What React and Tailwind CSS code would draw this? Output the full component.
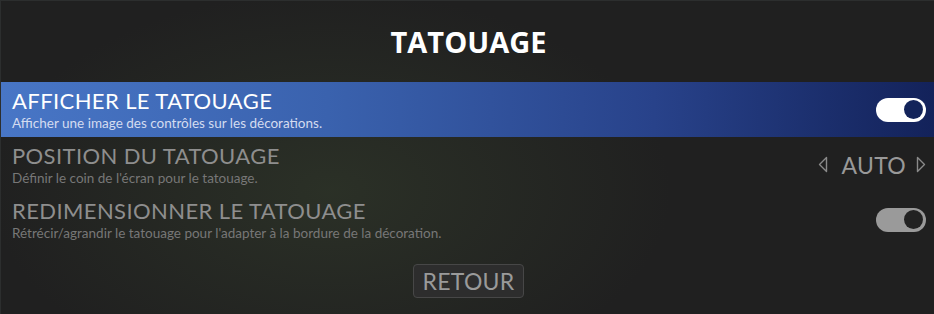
import React from "react";

function Toggle({ on }) {
  return on ? (
    <div className="w-[50px] h-[24px] rounded-full bg-white flex items-center justify-end pr-[3px]">
      <div className="w-[19px] h-[19px] rounded-full bg-[#13245a]" />
    </div>
  ) : (
    <div className="w-[50px] h-[24px] rounded-full bg-[#9a9a9a] flex items-center justify-end pr-[3px]">
      <div className="w-[19px] h-[19px] rounded-full bg-[#222222]" />
    </div>
  );
}

function Row({ title, desc, selected, right }) {
  return (
    <div
      className={
        "h-[55px] flex items-center justify-between pl-[11px] pr-[8px] " +
        (selected
          ? "bg-[linear-gradient(90deg,#4876c6_0%,#3a62ae_35%,#28428a_70%,#13225a_100%)]"
          : "")
      }
    >
      <div className="flex flex-col">
        <div
          className={
            "text-[22px] leading-[26px] tracking-[0.4px] font-['Lato',sans-serif] " +
            (selected ? "text-white" : "text-[#8e8e8e]")
          }
        >
          {title}
        </div>
        <div
          className={
            "text-[13.5px] leading-[16px] mt-[1px] font-['Lato',sans-serif] " +
            (selected ? "text-[#d4dcf0]" : "text-[#777777]")
          }
        >
          {desc}
        </div>
      </div>
      {right}
    </div>
  );
}

export default function App() {
  return (
    <div className="relative w-[934px] h-[314px] overflow-hidden bg-[#202020] border-t border-l border-[#2c2e2e]">
      <div className="absolute inset-0 bg-[radial-gradient(ellipse_340px_200px_at_330px_190px,rgba(52,62,44,0.55),rgba(32,32,32,0)_100%)]" />
      <div className="relative flex flex-col h-full">
        <div className="h-[81px] flex items-center justify-center">
          <div className="text-[29px] font-bold text-white font-['Open_Sans',sans-serif] mt-[1px] pl-[2px]">
            TATOUAGE
          </div>
        </div>
        <Row
          selected
          title="AFFICHER LE TATOUAGE"
          desc="Afficher une image des contrôles sur les décorations."
          right={<Toggle on />}
        />
        <Row
          title="POSITION DU TATOUAGE"
          desc="Définir le coin de l'écran pour le tatouage."
          right={
            <div className="flex items-center text-[#999999] font-['Lato',sans-serif]">
              <svg width="10" height="17" viewBox="0 0 10 17" className="mr-[13px]">
                <path d="M8.5 1.5 L1.5 8.5 L8.5 15.5 Z" fill="none" stroke="#8a8a8a" strokeWidth="1.4" strokeLinejoin="round" />
              </svg>
              <span className="text-[23px] leading-[26px] tracking-[0.3px]">AUTO</span>
              <svg width="10" height="17" viewBox="0 0 10 17" className="ml-[10px]">
                <path d="M1.5 1.5 L8.5 8.5 L1.5 15.5 Z" fill="none" stroke="#8a8a8a" strokeWidth="1.4" strokeLinejoin="round" />
              </svg>
            </div>
          }
        />
        <Row
          title="REDIMENSIONNER LE TATOUAGE"
          desc="Rétrécir/agrandir le tatouage pour l'adapter à la bordure de la décoration."
          right={<Toggle />}
        />
        <div className="flex justify-center mt-[17px] pl-[2px]">
          <div className="w-[111px] h-[34px] flex items-center justify-center rounded-[4px] border border-[#474747] bg-[#2d2d2d] text-[#9a9a9a] text-[23px] tracking-[0.3px] font-['Lato',sans-serif]">
            RETOUR
          </div>
        </div>
      </div>
    </div>
  );
}
